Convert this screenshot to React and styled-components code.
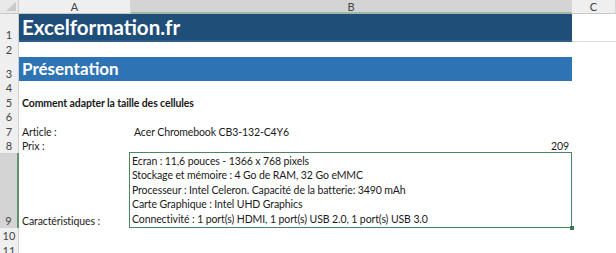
import React from 'react'
import styled, { createGlobalStyle } from 'styled-components'

const GlobalStyle = createGlobalStyle`
  html, body {
    margin: 0;
    padding: 0;
    background: #fff;
    overflow: hidden;
  }
  body {
    font-family: Lato, "Open Sans", sans-serif;
    color: #1a1a1a;
  }
`

const Sheet = styled.div`
  display: grid;
  grid-template-columns: 19px 112px 441px 44px;
  grid-template-rows: 14px 28px 15px 24px 14px 15px 14px 15px 14px 75px 15px 15px;
  width: 616px;
  height: 253px;
  overflow: hidden;
`

const Corner = styled.div`
  background: #e9e9e9;
  border-right: 1px solid #d0d0d0;
  border-bottom: 1px solid #c8c8c8;
  position: relative;
  &::after {
    content: '';
    position: absolute;
    right: 2px;
    bottom: 2px;
    border-left: 10px solid transparent;
    border-bottom: 9px solid #c9c9c9;
  }
`

const ColHead = styled.div`
  display: flex;
  align-items: center;
  justify-content: center;
  font-size: 11px;
  color: #444;
  background: ${(p) => (p.$active ? '#d4d4d4' : '#efefef')};
  border-right: 1px solid #d6d6d6;
  border-bottom: ${(p) => (p.$active ? '2px solid #9fb8a6' : '1px solid #c8c8c8')};
  box-sizing: border-box;
`

const RowHead = styled.div`
  display: flex;
  align-items: flex-end;
  justify-content: center;
  padding-bottom: 1px;
  box-sizing: border-box;
  font-size: 11px;
  color: #444;
  background: ${(p) => (p.$active ? '#d4d4d4' : '#efefef')};
  border-right: ${(p) => (p.$active ? '2px solid #5f9270' : '1px solid #d0d0d0')};
`

const Banner = styled.div`
  grid-column: span 2;
  display: flex;
  align-items: center;
  padding-left: 3px;
  box-sizing: border-box;
  color: #fff;
  font-weight: 700;
  font-size: ${(p) => p.$size}px;
  background: ${(p) => p.$bg};
  border-bottom: 2px solid ${(p) => p.$edge};
  white-space: nowrap;
`

const Cell = styled.div`
  display: flex;
  align-items: flex-end;
  justify-content: ${(p) => (p.$right ? 'flex-end' : 'flex-start')};
  padding: 0 3px 0 3px;
  box-sizing: border-box;
  font-size: 10.5px;
  letter-spacing: -0.1px;
  line-height: 14px;
  font-weight: ${(p) => (p.$bold ? 700 : 400)};
  white-space: nowrap;
  border-bottom: ${(p) => (p.$line ? '1px solid #dcdcdc' : 'none')};
`

const Spec = styled.div`
  position: relative;
  margin: -1px 0 0 -2px;
  border: 1.5px solid #4e8462;
  padding: 1px 2px 1px 2px;
  display: flex;
  flex-direction: column;
  justify-content: flex-end;
  font-size: 10.5px;
  letter-spacing: -0.1px;
  line-height: 14.5px;
  white-space: nowrap;
  &::after {
    content: '';
    position: absolute;
    right: -3px;
    bottom: -3px;
    width: 4px;
    height: 4px;
    background: #3f7553;
  }
`

const specs = [
  'Ecran : 11,6 pouces - 1366 x 768 pixels',
  'Stockage et mémoire : 4 Go de RAM, 32 Go eMMC',
  'Processeur : Intel Celeron. Capacité de la batterie: 3490 mAh',
  'Carte Graphique : Intel UHD Graphics',
  'Connectivité : 1 port(s) HDMI, 1 port(s) USB 2.0, 1 port(s) USB 3.0',
]

const App = () => (
  <>
    <GlobalStyle />
    <Sheet>
      <Corner />
      <ColHead>A</ColHead>
      <ColHead $active>B</ColHead>
      <ColHead>C</ColHead>

      <RowHead>1</RowHead>
      <Banner $size={20.5} $bg="#1f4e78" $edge="#2b5d8a">Excelformation.fr</Banner>
      <Cell $line />

      <RowHead>2</RowHead>
      <Cell />
      <Cell />
      <Cell />

      <RowHead>3</RowHead>
      <Banner $size={17} $bg="#2e74b5" $edge="#2e74b5">Présentation</Banner>
      <Cell />

      <RowHead>4</RowHead>
      <Cell />
      <Cell />
      <Cell />

      <RowHead>5</RowHead>
      <Cell $bold>Comment adapter la taille des cellules</Cell>
      <Cell />
      <Cell />

      <RowHead>6</RowHead>
      <Cell />
      <Cell />
      <Cell />

      <RowHead>7</RowHead>
      <Cell>Article :</Cell>
      <Cell>Acer Chromebook CB3-132-C4Y6</Cell>
      <Cell />

      <RowHead>8</RowHead>
      <Cell>Prix :</Cell>
      <Cell $right>209</Cell>
      <Cell />

      <RowHead $active>9</RowHead>
      <Cell>Caractéristiques :</Cell>
      <Spec>
        {specs.map((s) => (
          <div key={s}>{s}</div>
        ))}
      </Spec>
      <Cell />

      <RowHead>10</RowHead>
      <Cell />
      <Cell />
      <Cell />

      <RowHead>11</RowHead>
      <Cell />
      <Cell />
      <Cell />
    </Sheet>
  </>
)

export default App
